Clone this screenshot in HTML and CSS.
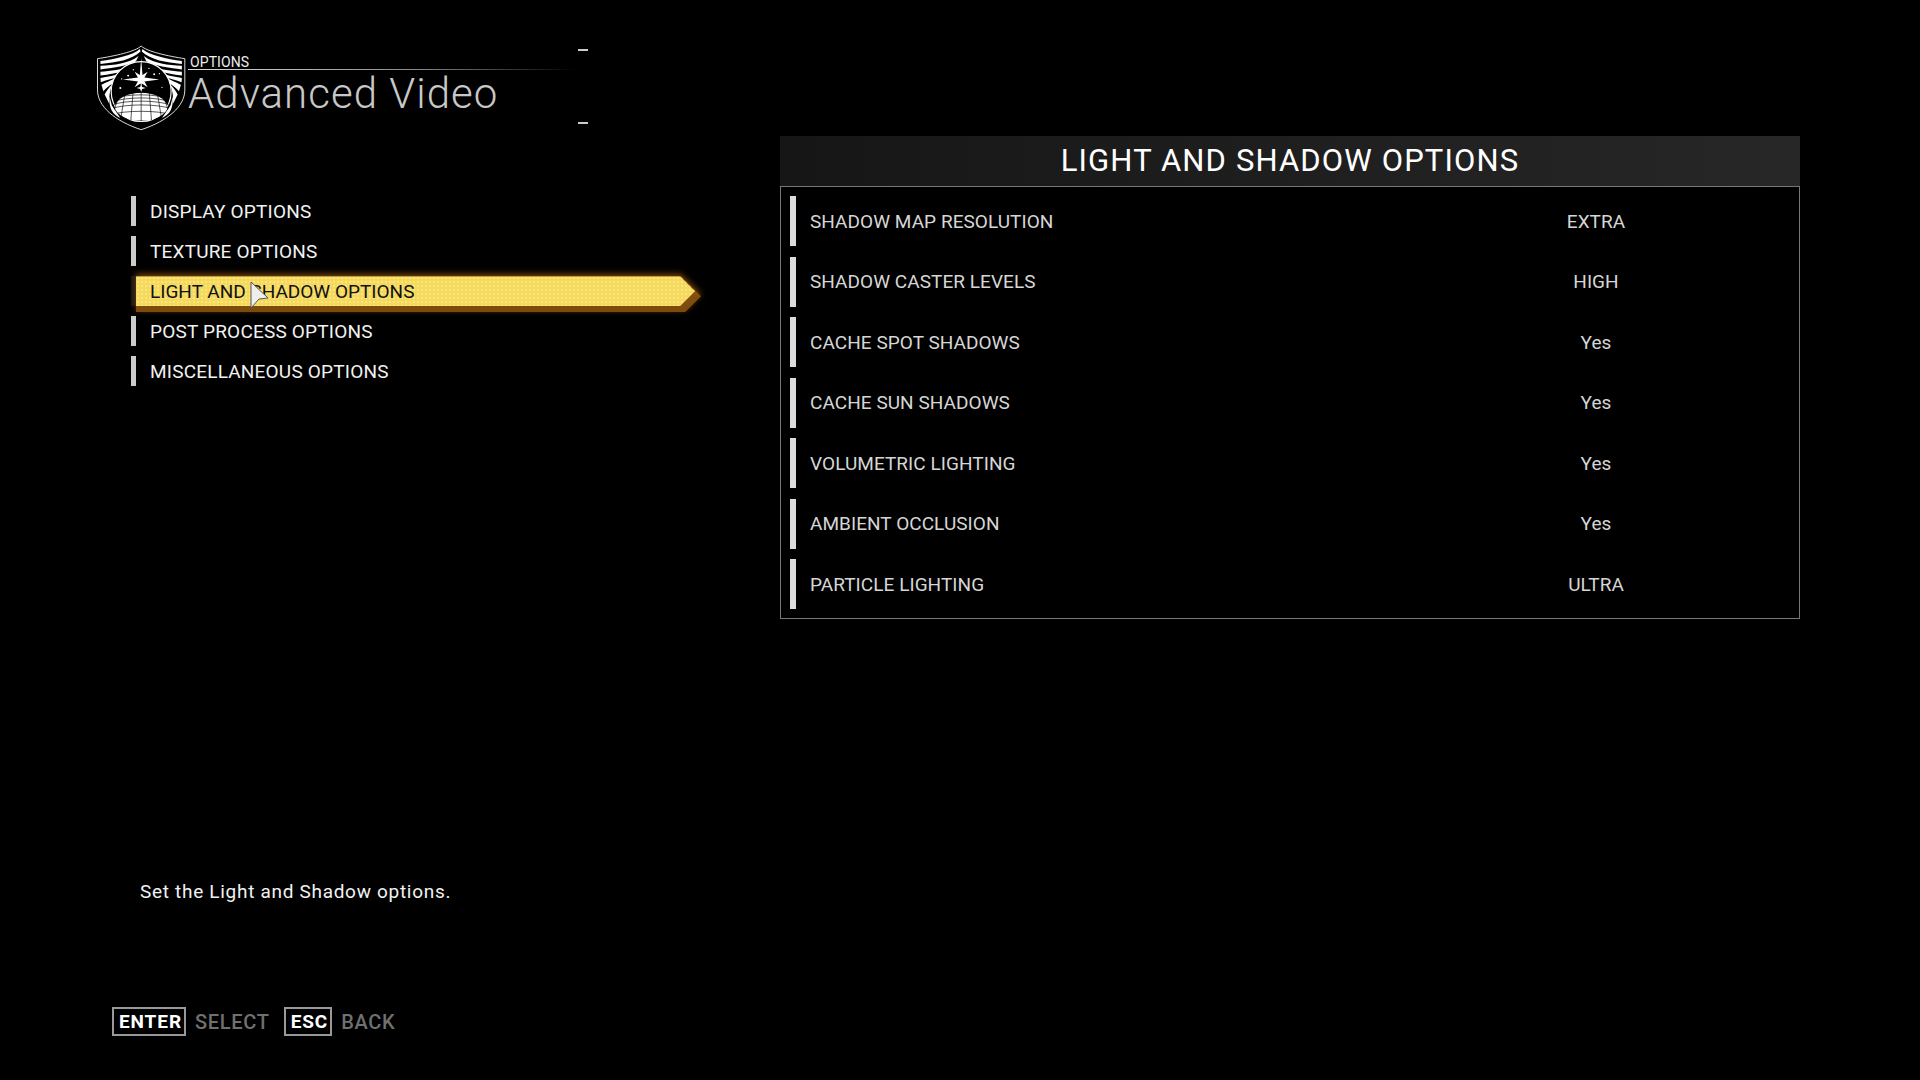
FILE: index.html
```html
<!DOCTYPE html>
<html lang="en">
<head>
<meta charset="utf-8">
<title>Advanced Video</title>
<link rel="stylesheet" href="styles.css">
</head>
<body>
<div class="screen">
  <section class="left">
    <header class="head">
      <svg class="logo" viewBox="15 12 273 264" aria-hidden="true">
        <defs>
          <g id="wing" fill="#fff">
            <path d="M148 24C128 44 72 54 27 61L27 70C76 66 122 58 150 32Z"/>
            <path d="M27 76C70 74 112 70 144 46L136 62C104 78 64 82 27 87Z"/>
            <path d="M27 94C58 92 92 88 124 74L106 90C80 98 52 102 27 106Z"/>
            <path d="M27 113C48 110 72 106 98 94L82 110C62 116 44 120 28 126Z"/>
            <path d="M30 134C44 126 58 122 78 110L66 130C54 136 44 144 36 154Z"/>
            <path d="M40 164C46 152 52 144 62 134L56 158C54 170 54 178 54 192Z"/>
            <path d="M62 214C54 196 54 182 55 170L62 198L88 236C76 230 68 224 62 214Z"/>
          </g>
          <clipPath id="dome"><path d="M66 200C82 140 222 140 238 200C232 228 192 246 152 246C112 246 72 228 66 200Z"/></clipPath>
        </defs>
        <path d="M152 15C135 32 70 46 18 54L18 150C18 200 70 245 152 272C234 245 286 200 286 150L286 54C234 46 169 32 152 15Z" fill="#000" stroke="#ddd" stroke-width="3"/>
        <use href="#wing"/>
        <use href="#wing" transform="translate(304 0) scale(-1 1)"/>
        <circle cx="152" cy="155" r="92" fill="#000" stroke="#fff" stroke-width="3.5"/>
        <path d="M152 52L156 104L172 94L162 112L208 118L162 124L172 142L154 130L152 138L150 130L132 142L142 124L96 118L142 112L132 94L148 104Z" fill="#fff"/>
        <path d="M152 132L155 141L166 144L155 147L152 156L149 147L138 144L149 141Z" fill="#fff"/>
        <g fill="#fff">
          <circle cx="112" cy="106" r="3"/><circle cx="192" cy="102" r="3"/><circle cx="92" cy="116" r="2"/><circle cx="208" cy="100" r="2"/>
          <circle cx="88" cy="144" r="3"/><circle cx="216" cy="142" r="2"/><circle cx="128" cy="88" r="2"/><circle cx="176" cy="84" r="2"/>
        </g>
        <path d="M70 202C86 144 218 144 234 202C228 228 192 244 152 244C112 244 76 228 70 202Z" fill="#fff"/>
        <g clip-path="url(#dome)" fill="none" stroke="#000" stroke-width="2">
          <path d="M60 170C100 152 204 152 244 170M60 180C100 160 204 160 244 180M60 188C100 170 204 170 244 188M60 197C100 180 204 180 244 197M60 208C100 192 204 192 244 208M60 226C100 212 204 212 244 226"/>
          <path d="M152 146V246M128 146L120 246M104 150L88 246M86 162L62 232M176 146L184 246M200 150L216 246M218 162L242 232"/>
        </g>
      </svg>
      <div class="titles">
        <div class="kicker">OPTIONS</div>
        <h1 class="title">Advanced Video</h1>
      </div>
      <div class="ticks"><i></i><i></i></div>
    </header>

    <nav class="menu">
      <a class="item">DISPLAY OPTIONS</a>
      <a class="item">TEXTURE OPTIONS</a>
      <a class="item active"><span class="plate"><span class="plate-base"><span class="plate-face"></span></span></span><span class="label">LIGHT AND SHADOW OPTIONS</span>
        <svg class="cursor" viewBox="0 0 19 28" aria-hidden="true"><path d="M1 1L18 17L9 18L1 27Z" fill="#eee" stroke="#555" stroke-width="1"/></svg>
      </a>
      <a class="item">POST PROCESS OPTIONS</a>
      <a class="item">MISCELLANEOUS OPTIONS</a>
    </nav>

    <p class="desc">Set the Light and Shadow options.</p>

    <footer class="keys">
      <kbd class="key">ENTER</kbd><span class="act">SELECT</span>
      <kbd class="key">ESC</kbd><span class="act">BACK</span>
    </footer>
  </section>

  <section class="panel">
    <h2 class="panel-title">LIGHT AND SHADOW OPTIONS</h2>
    <div class="rows">
      <div class="row"><span class="name">SHADOW MAP RESOLUTION</span><span class="val">EXTRA</span></div>
      <div class="row"><span class="name">SHADOW CASTER LEVELS</span><span class="val">HIGH</span></div>
      <div class="row"><span class="name">CACHE SPOT SHADOWS</span><span class="val">Yes</span></div>
      <div class="row"><span class="name">CACHE SUN SHADOWS</span><span class="val">Yes</span></div>
      <div class="row"><span class="name">VOLUMETRIC LIGHTING</span><span class="val">Yes</span></div>
      <div class="row"><span class="name">AMBIENT OCCLUSION</span><span class="val">Yes</span></div>
      <div class="row"><span class="name">PARTICLE LIGHTING</span><span class="val">ULTRA</span></div>
    </div>
  </section>
</div>
</body>
</html>
```
FILE: styles.css
```css
* { box-sizing: border-box; }
html, body { margin: 0; height: 100%; background: #000; overflow: hidden; }
body { font-family: Roboto, "Liberation Sans", sans-serif; color: #fff; }
.screen { display: flex; width: 1920px; height: 1080px; }

.left { width: 780px; padding: 45px 0 0 95px; display: flex; flex-direction: column; flex: none; }
.head { display: flex; height: 86px; position: relative; }
.logo { width: 92px; height: 86px; flex: none; }
.titles { margin-left: 1px; width: 387px; flex: none; }
.kicker { font-size: 14px; line-height: 15px; letter-spacing: 0.1px; color: #eee; padding: 10px 0 0 2px; height: 25px; border-bottom: 1px solid; border-image: linear-gradient(90deg, #ddd 0%, #888 60%, #000 100%) 1; }
.title { margin: 2px 0 0; font-weight: 300; font-size: 42px; line-height: 44px; letter-spacing: 1.03px; color: #c8c8c8; }
.ticks { width: 10px; margin-left: 3px; display: flex; flex-direction: column; justify-content: space-between; padding: 4px 0 7px; }
.ticks i { display: block; height: 2px; background: #ccc; }

.menu { margin-top: 65px; display: flex; flex-direction: column; gap: 10.1px; width: 580px; margin-left: 36px; }
.item { position: relative; display: flex; align-items: center; height: 30px; padding-left: 14px; border-left: 5px solid #ccc; font-size: 19px; letter-spacing: 0.2px; color: #f2f2f2; }
.item.active { border-left-color: #151515; color: #111; letter-spacing: 0; }
.label { position: relative; }
.plate { position: absolute; left: 0; top: 0; filter: drop-shadow(0 -2px 3px #7a4608); }
.plate-base { display: block; width: 565px; height: 36px; clip-path: polygon(0 0, 545px 0, 565px 20px, 549px 36px, 0 36px); background: linear-gradient(#8a5512, #7c4a0c); }
.plate-face { display: block; width: 559px; height: 30px; clip-path: polygon(0 0, 544px 0, 559px 15px, 544px 30px, 0 30px); background-color: #f4d860; background-image: radial-gradient(circle, #fce676 1px, transparent 1.4px); background-size: 4px 4px; }
.cursor { position: absolute; left: 114px; top: 5px; width: 19px; height: 28px; }

.desc { margin: 494px 0 0 45px; font-size: 19px; line-height: 24px; letter-spacing: 0.7px; color: #f2f2f2; }

.keys { margin: 103px 0 0 17px; display: flex; align-items: center; font-size: 20px; letter-spacing: 0.7px; font-weight: 500; }
.key { font-family: inherit; font-weight: 700; font-size: 19px; letter-spacing: 0.9px; color: #fff; border: 2px solid #999; height: 29px; line-height: 25px; padding: 0 2px 0 5px; }
.act { color: #707070; margin: 0 14px 0 9px; }

.panel { width: 1020px; margin-top: 136px; flex: none; align-self: flex-start; }
.panel-title { margin: 0; height: 50px; line-height: 50px; text-align: center; font-weight: 400; font-size: 31px; letter-spacing: 1.13px; background: linear-gradient(90deg, #161616, #272727); }
.rows { height: 433px; border: 1px solid #777; padding: 9px; display: flex; flex-direction: column; gap: 10.5px; }
.row { height: 50px; flex: none; display: flex; align-items: center; border-left: 6px solid #ddd; padding-left: 14px; position: relative; font-size: 19px; letter-spacing: 0.05px; color: #d6d6d6; }
.val { position: absolute; left: 720px; width: 160px; text-align: center; }
```
